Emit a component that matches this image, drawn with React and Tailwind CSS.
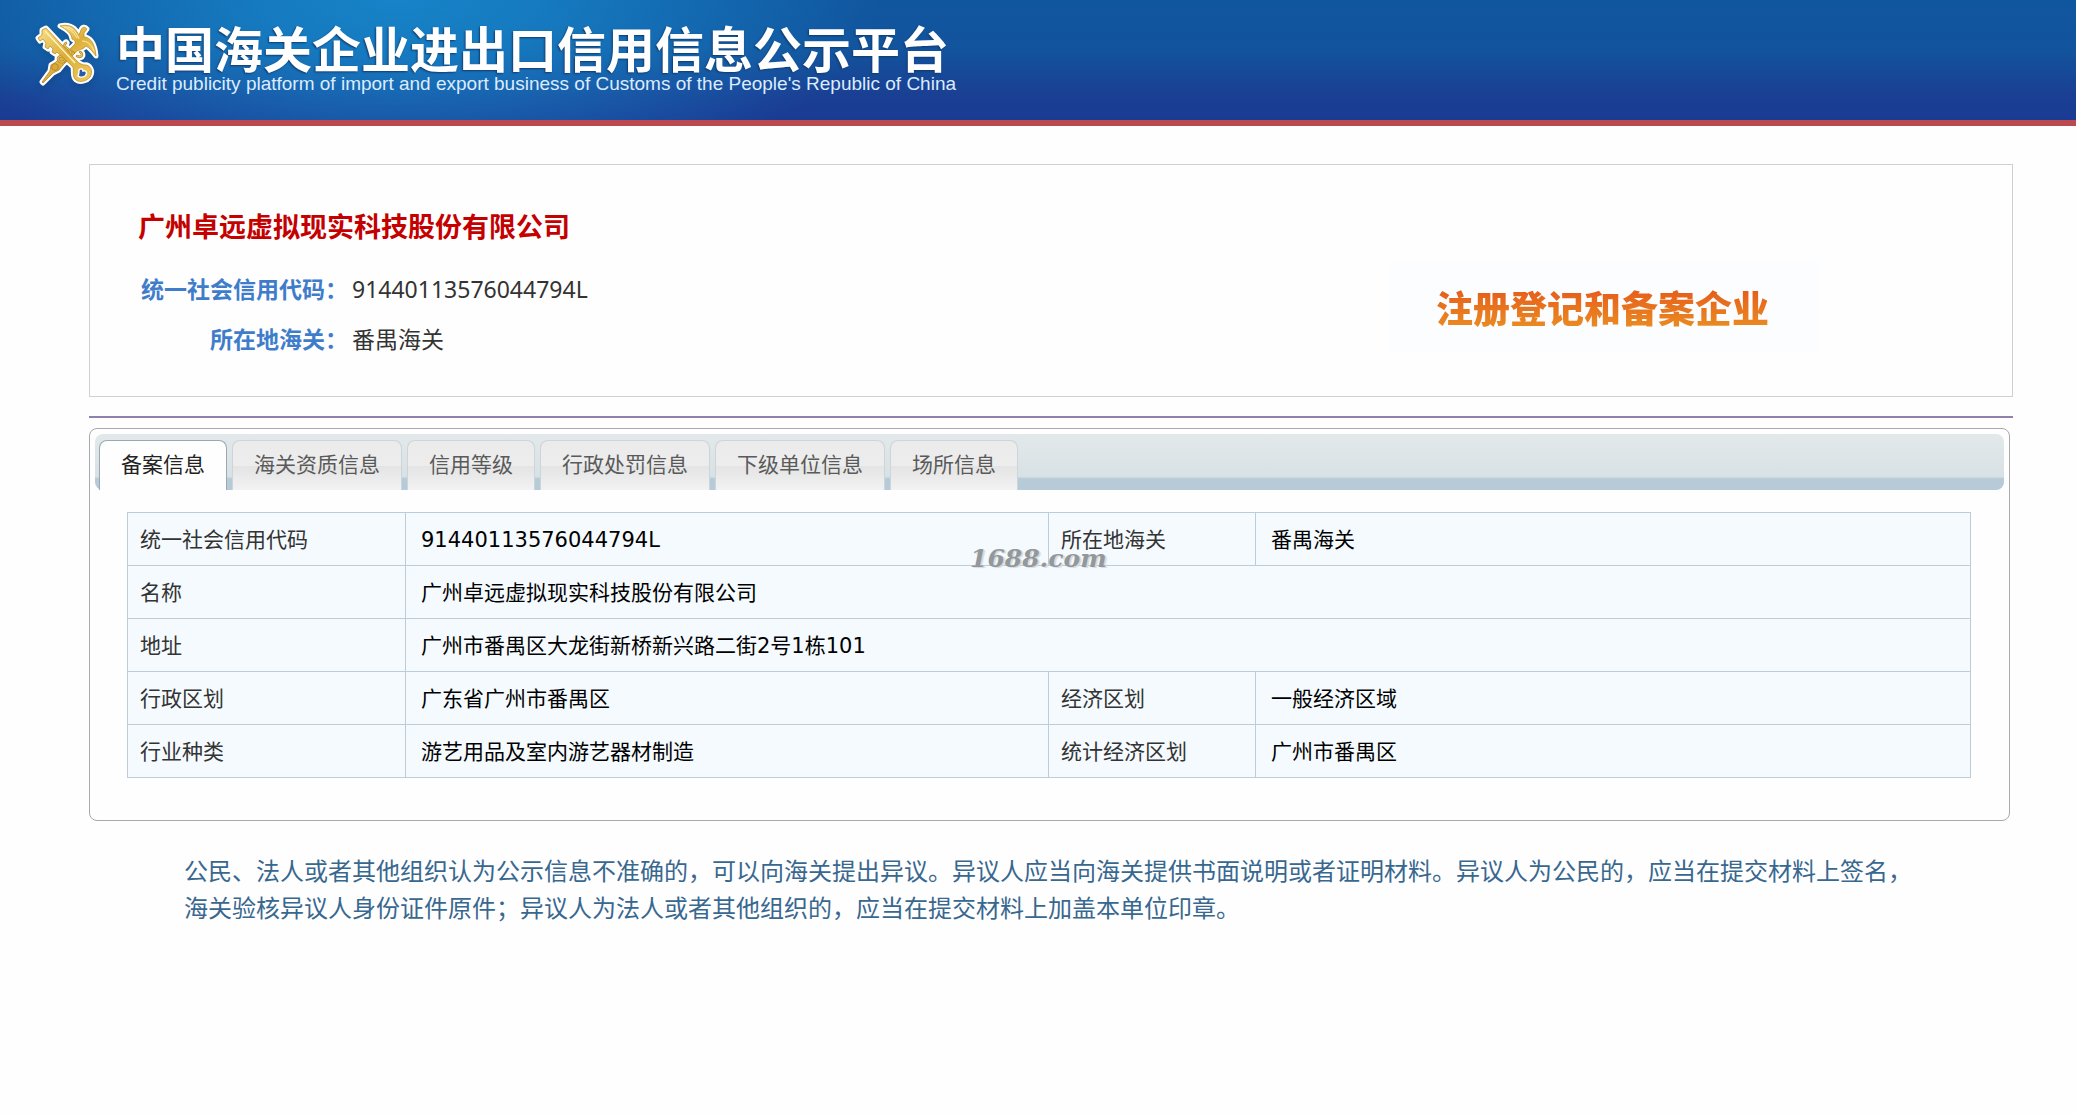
const tabs = ["备案信息", "海关资质信息", "信用等级", "行政处罚信息", "下级单位信息", "场所信息"];

const rows = [
  [["统一社会信用代码", "91440113576044794L"], ["所在地海关", "番禺海关"]],
  [["名称", "广州卓远虚拟现实科技股份有限公司"]],
  [["地址", "广州市番禺区大龙街新桥新兴路二街2号1栋101"]],
  [["行政区划", "广东省广州市番禺区"], ["经济区划", "一般经济区域"]],
  [["行业种类", "游艺用品及室内游艺器材制造"], ["统计经济区划", "广州市番禺区"]],
];

const wings =
  "M26 6 C33 4 40 6 43 12 L45 15 L47 10 C48 7 51 6 53 9 L50 13 L50 17 C56 17 61 23 62 36 C59 32 56 28 52 26 C49 30 44 29 41 33 L36 29 L41 24 C42 21 40 20 38 19 C38 14 32 9 26 6 Z";
const staff = "M34 29 L41 33 L29 45 L25 50 L19 53 L9 63 L8 62 L16 51 L17 45 L22 42 Z";
const key =
  "M8 10 L12 8 L43 41 C45 44 48 44 50 45 C56 44 60 51 56 57 C53 61 46 63 42 60 C38 57 40 52 39 47 L23 32 L21 34 L18 32 L19 29 L16 26 L14 29 L11 27 L12 23 L9 19 L6 21 L4 18 L8 15 Z";
const snakes = "M32 23 C26 28 39 28 36 34 C33 39 24 33 24 39 C25 43 30 43 31 40 M43 36 C49 39 49 33 46 32";

function Emblem() {
  return (
    <svg className="h-[68px] w-[66px] shrink-0 drop-shadow-md" viewBox="0 0 66 68" aria-hidden="true">
      <defs>
        <linearGradient id="gold" x1="0" y1="0" x2="1" y2="1">
          <stop offset="0" stopColor="#f8e08a" />
          <stop offset="0.5" stopColor="#dcae38" />
          <stop offset="1" stopColor="#efcb5c" />
        </linearGradient>
      </defs>
      <g fill="#fff" stroke="#fff" strokeWidth="5" strokeLinejoin="round" strokeLinecap="round">
        <path d={wings} />
        <path d={staff} />
        <path d={key} />
        <path d={snakes} strokeWidth="7" fill="none" />
      </g>
      <path d={wings} fill="url(#gold)" stroke="#b4861f" strokeWidth="0.7" />
      <path d="M30 7 C38 9 41 15 43 18 M34 7 C40 9 43 14 45 19 M60 31 C57 24 53 21 48 21" fill="none" stroke="#fcefb4" strokeWidth="1" />
      <path d={staff} fill="url(#gold)" stroke="#a97a1c" strokeWidth="0.7" />
      <circle cx="21" cy="47" r="3.4" fill="#dba93a" stroke="#a97a1c" strokeWidth="0.7" />
      <path d={snakes} fill="none" stroke="#c2902c" strokeWidth="2.6" strokeLinecap="round" />
      <path d={snakes} fill="none" stroke="#ecd078" strokeWidth="1" strokeLinecap="round" />
      <path d={key} fill="url(#gold)" stroke="#b4861f" strokeWidth="0.7" />
      <path d="M11 11 L41 43" stroke="#fdf3bd" strokeWidth="1.4" />
      <path d="M45 50 C47 48 49 49 49 51 C52 50 54 53 51 56 C48 58 45 57 44 56 C45 54 45 52 45 50 Z" fill="#2a5aa4" stroke="#fff" strokeWidth="1.4" />
    </svg>
  );
}

export default function App() {
  return (
    <div className="min-h-screen bg-[#fefefe] font-['Noto_Sans','Noto_Sans_CJK_SC',sans-serif]">
      <header className="flex h-[126px] items-start gap-4 border-b-[6px] border-[#bb4a50] bg-[radial-gradient(ellipse_480px_190px_at_400px_0px,#1783c8_0%,#1783c8cc_30%,transparent_100%),linear-gradient(to_bottom,#10569f_0%,#12549d_40%,#1a3f93_80%,#1a3b94_100%)] pt-5 pl-[34px]">
        <Emblem />
        <div className="text-white">
          <h1 className="font-['Noto_Sans_CJK_SC',sans-serif] text-[49px] leading-[54px] font-bold whitespace-nowrap [text-shadow:-1px_1px_2px_#123a6c]">
            中国海关企业进出口信用信息公示平台
          </h1>
          <p className="font-['Liberation_Sans',sans-serif] text-[19px] leading-5 whitespace-nowrap text-[#dcecff]">
            Credit publicity platform of import and export business of Customs of the People&apos;s Republic of China
          </p>
        </div>
      </header>

      <main className="pt-[38px] pr-[63px] pl-[89px]">
        <section className="flex h-[233px] items-start justify-between border border-[#d0d0d2] pr-[195px] pl-12">
          <div className="pt-[42px]">
            <h2 className="text-[27px] leading-10 font-bold text-[#c40000]">广州卓远虚拟现实科技股份有限公司</h2>
            <dl className="mt-[17px] grid grid-cols-[210px_auto] gap-x-1 text-[23px] leading-[50px] text-[#333]">
              <dt className="text-right font-bold whitespace-nowrap text-[#3f7dcb]">统一社会信用代码：</dt>
              <dd>91440113576044794L</dd>
              <dt className="text-right font-bold whitespace-nowrap text-[#3f7dcb]">所在地海关：</dt>
              <dd>番禺海关</dd>
            </dl>
          </div>
          <div className="mt-[97px] bg-[#fcfdff] px-12 py-5">
            <strong className="block bg-linear-to-b from-[#e4521a] to-[#ea9022] bg-clip-text font-['Noto_Sans_CJK_SC',sans-serif] text-[37px] leading-[50px] font-black text-transparent">
              注册登记和备案企业
            </strong>
          </div>
        </section>

        <hr className="mt-[19px] border-t-2 border-[#8f80ae]" />

        <section className="relative mt-[10px] mr-[3px] rounded-lg border border-[#a9a9ad] p-[5px] pb-[42px]">
          <nav role="tablist" className="flex h-14 gap-[5px] rounded-lg bg-[linear-gradient(to_bottom,#e3e9ea_0%,#d8e1e5_76%,#b7cad8_80%,#b7cad8_100%)] pt-[6px] pl-1">
            {tabs.map((tab, i) => (
              <button
                key={tab}
                type="button"
                role="tab"
                aria-selected={i === 0}
                className={
                  i === 0
                    ? "rounded-t-lg border border-b-0 border-[#9aa9b4] bg-[#fefefe] px-[21px] pb-1 text-[21px] leading-[30px] text-[#222]"
                    : "rounded-t-lg border border-b-0 border-[#cbd5da] bg-[linear-gradient(to_bottom,#ebebeb_0%,#ededed_50%,#e4e4e4_52%,#f2f2f2_100%)] px-[21px] pb-1 text-[21px] leading-[30px] text-[#5a5a5a]"
                }
              >
                {tab}
              </button>
            ))}
          </nav>

          <table className="mt-[22px] ml-8 w-[calc(100%-65px)] table-fixed border-collapse bg-[#f4fafe] font-['DejaVu_Sans','Noto_Sans_CJK_SC',sans-serif] text-[21px] leading-[30px]">
            <colgroup>
              <col className="w-[278px]" />
              <col />
              <col className="w-[207px]" />
              <col className="w-[715px]" />
            </colgroup>
            <tbody>
              {rows.map((pairs) => (
                <tr key={pairs[0][0]} className="h-[53px]">
                  {pairs.map(([label, value]) => [
                    <th key={label} scope="row" className="border border-[#bccdd9] px-3 pt-0.5 text-left font-normal text-[#333]">
                      {label}
                    </th>,
                    <td key={value} colSpan={pairs.length === 1 ? 3 : 1} className="border border-[#bccdd9] px-[15px] pt-0.5 text-black">
                      {value}
                    </td>,
                  ])}
                </tr>
              ))}
            </tbody>
          </table>

          <span className="pointer-events-none absolute top-[112px] left-[880px] font-['DejaVu_Serif',serif] text-[25px] leading-9 font-bold text-[#92989c] italic [text-shadow:2px_1px_1px_#d5d9dc]">
            1688.com
          </span>
        </section>

        <p className="mt-[30px] pr-[93px] pl-[95px] font-['Noto_Sans_CJK_SC',sans-serif] text-[24px] leading-[37px] text-[#38678f]">
          公民、法人或者其他组织认为公示信息不准确的，可以向海关提出异议。异议人应当向海关提供书面说明或者证明材料。异议人为公民的，应当在提交材料上签名，海关验核异议人身份证件原件；异议人为法人或者其他组织的，应当在提交材料上加盖本单位印章。
        </p>
      </main>
    </div>
  );
}
